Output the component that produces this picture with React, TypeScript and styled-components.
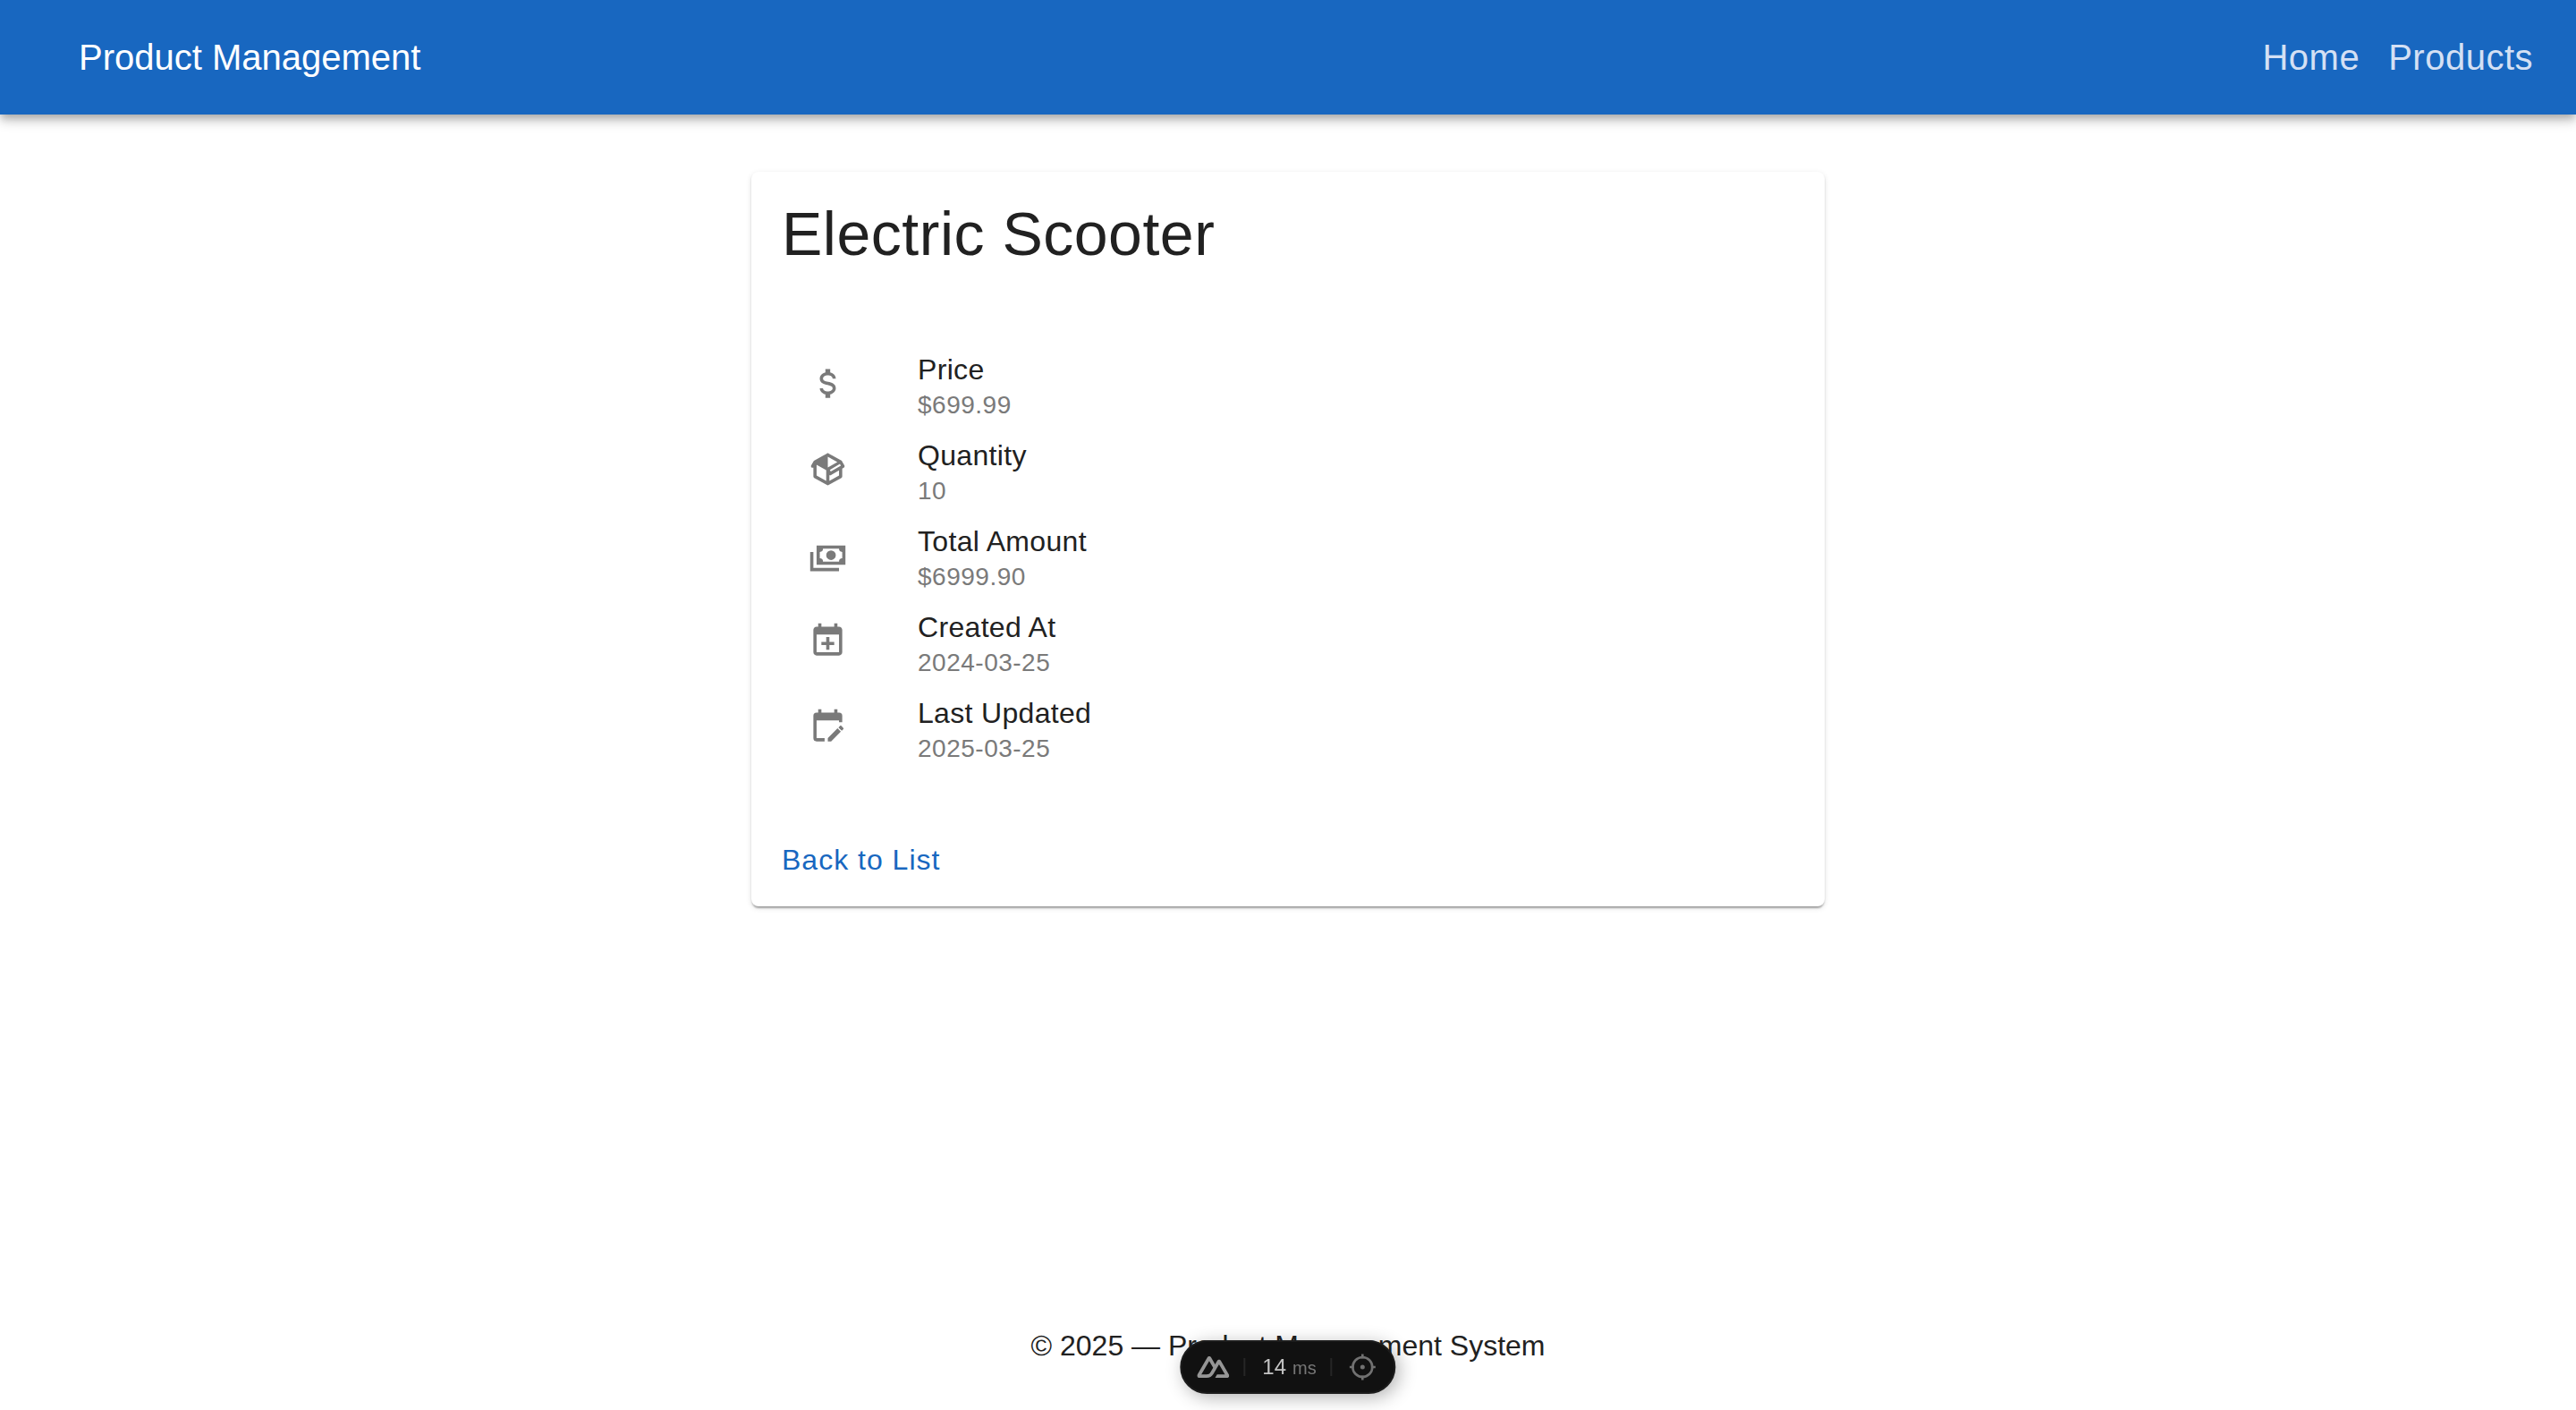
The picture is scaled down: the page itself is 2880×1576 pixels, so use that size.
import React from "react";
import styled, { createGlobalStyle } from "styled-components";

const GlobalStyle = createGlobalStyle`
  *, *::before, *::after { box-sizing: border-box; }
  body {
    margin: 0;
    background: #ffffff;
    color: #212121;
    font-family: "Liberation Sans", Helvetica, Arial, sans-serif;
    font-size: 32px;
    line-height: 48px;
  }
`;

const Page = styled.div`
  display: flex;
  flex-direction: column;
  min-height: 100vh;
`;

const AppBar = styled.header`
  display: flex;
  align-items: center;
  justify-content: space-between;
  height: 128px;
  padding: 0 48px 0 88px;
  background: #1867c0;
  color: #ffffff;
  font-size: 40px;
  box-shadow:
    0 4px 8px -2px rgba(0, 0, 0, 0.2),
    0 8px 10px 0 rgba(0, 0, 0, 0.14),
    0 2px 20px 0 rgba(0, 0, 0, 0.12);
`;

const Brand = styled.div`
  white-space: nowrap;
`;

const Nav = styled.nav`
  display: flex;
  gap: 32px;
`;

const NavLink = styled.a`
  color: #d4e0f4;
  text-decoration: none;
  letter-spacing: 0.0125em;
`;

const Main = styled.main`
  flex: 1;
  padding: 64px 32px;
`;

const Card = styled.article`
  max-width: 1200px;
  margin: 0 auto;
  padding: 30px 32px 28px 34px;
  border-radius: 8px;
  background: #ffffff;
  box-shadow:
    0 4px 2px -2px rgba(0, 0, 0, 0.2),
    0 2px 2px 0 rgba(0, 0, 0, 0.14),
    0 2px 6px 0 rgba(0, 0, 0, 0.12);
`;

const CardTitle = styled.h1`
  margin: 0;
  font-size: 68px;
  font-weight: 400;
  line-height: 78px;
  letter-spacing: 0.0075em;
`;

const DetailList = styled.ul`
  margin: 83px 0 74px;
  padding: 0;
  list-style: none;
`;

const DetailRow = styled.li`
  display: grid;
  grid-template-columns: 122px 1fr;
  padding: 8px 30px;
`;

const DetailIcon = styled.svg`
  width: 43px;
  height: 43px;
  margin-top: 16px;
  fill: #7a7a7a;
`;

const DetailLabel = styled.div`
  line-height: 44px;
  letter-spacing: 0.01em;
`;

const DetailValue = styled.div`
  color: #7a7a7a;
  font-size: 28px;
  line-height: 36px;
  letter-spacing: 0.018em;
`;

const BackLink = styled.a`
  display: inline-block;
  color: #1867c0;
  text-decoration: none;
  letter-spacing: 1px;
`;

const Footer = styled.footer`
  padding: 32px 32px 48px;
  text-align: center;
`;

const DevPill = styled.aside`
  position: fixed;
  bottom: 18px;
  left: 50%;
  transform: translateX(-50%);
  display: flex;
  align-items: center;
  height: 60px;
  padding: 0 20px 0 17px;
  border: 2px solid #1c1c1c;
  border-radius: 30px;
  background: #111111;
  color: #c4c4c4;
  font-size: 24px;
  line-height: 32px;
  box-shadow: 4px 4px 20px rgba(0, 0, 0, 0.3);
`;

const PillButton = styled.button`
  display: flex;
  padding: 0;
  border: 0;
  background: none;
  cursor: pointer;
`;

const PillDivider = styled.span`
  width: 2px;
  height: 20px;
  margin: 0 19px 0 16px;
  background: #262626;
`;

const Timing = styled.span`
  display: flex;
  align-items: baseline;
  gap: 7px;
`;

const Unit = styled.span`
  color: #777777;
  font-size: 20px;
`;

const icons = {
  price:
    "M7,15H9C9,16.08 10.37,17 12,17C13.63,17 15,16.08 15,15C15,13.9 13.96,13.5 11.76,12.97C9.64,12.44 7,11.78 7,9C7,7.21 8.47,5.69 10.5,5.18V3H13.5V5.18C15.53,5.69 17,7.21 17,9H15C15,7.92 13.63,7 12,7C10.37,7 9,7.92 9,9C9,10.1 10.04,10.5 12.24,11.03C14.36,11.56 17,12.22 17,15C17,16.79 15.53,18.31 13.5,18.82V21H10.5V18.82C8.47,18.31 7,16.79 7,15Z",
  box: "M2,10.96C1.5,10.68 1.35,10.07 1.63,9.59L3.13,7C3.24,6.8 3.41,6.66 3.6,6.58L11.43,2.18C11.59,2.06 11.79,2 12,2C12.21,2 12.41,2.06 12.57,2.18L20.47,6.62C20.66,6.72 20.82,6.88 20.91,7.08L22.36,9.6C22.64,10.08 22.47,10.69 22,10.96L21,11.54V16.5C21,16.88 20.79,17.21 20.47,17.38L12.57,21.82C12.41,21.94 12.21,22 12,22C11.79,22 11.59,21.94 11.43,21.82L3.53,17.38C3.21,17.21 3,16.88 3,16.5V10.96C2.7,11.13 2.32,11.14 2,10.96M12,4.15V4.15L12,10.85V10.85L17.96,7.5L12,4.15M5,15.91L11,19.29V12.58L5,9.21V15.91M19,15.91V12.69L14,15.59C13.67,15.77 13.3,15.76 13,15.6V19.29L19,15.91M13.85,13.36L20.13,9.73L19.55,8.72L13.27,12.35L13.85,13.36Z",
  cash: "M5,6H23V18H5V6M14,9A3,3 0 0,1 17,12A3,3 0 0,1 14,15A3,3 0 0,1 11,12A3,3 0 0,1 14,9M9,8A2,2 0 0,1 7,10V14A2,2 0 0,1 9,16H19A2,2 0 0,1 21,14V10A2,2 0 0,1 19,8H9M1,10H3V20H19V22H1V10Z",
  created:
    "M19 19V8H5V19H19M16 1H18V3H19C20.11 3 21 3.9 21 5V19C21 20.11 20.11 21 19 21H5C3.89 21 3 20.1 3 19V5C3 3.89 3.89 3 5 3H6V1H8V3H16V1M11 9.5H13V12.5H16V14.5H13V17.5H11V14.5H8V12.5H11V9.5Z",
  updated:
    "M19,3H18V1H16V3H8V1H6V3H5A2,2 0 0,0 3,5V19A2,2 0 0,0 5,21H10V19H5V8H19V9H21V5A2,2 0 0,0 19,3M21.7,13.35L20.7,14.35L18.65,12.35L19.65,11.35C19.85,11.14 20.19,11.13 20.42,11.35L21.7,12.63C21.89,12.83 21.89,13.15 21.7,13.35M12,18.94L18.07,12.88L20.12,14.88L14.06,21H12V18.94Z",
};

const details: { icon: keyof typeof icons; label: string; value: string }[] = [
  { icon: "price", label: "Price", value: "$699.99" },
  { icon: "box", label: "Quantity", value: "10" },
  { icon: "cash", label: "Total Amount", value: "$6999.90" },
  { icon: "created", label: "Created At", value: "2024-03-25" },
  { icon: "updated", label: "Last Updated", value: "2025-03-25" },
];

function NuxtMark() {
  return (
    <svg width="36" height="24" viewBox="0 54 324 216" fill="#969696" aria-hidden="true">
      <path d="M181.767 270H302.211C306.037 270 309.795 269.003 313.108 267.107C316.421 265.211 319.172 262.484 321.084 259.2C322.996 255.915 324.002 252.19 324 248.399C323.998 244.607 322.989 240.883 321.074 237.601L240.187 98.7439C238.275 95.4607 235.525 92.7342 232.213 90.8385C228.901 88.9429 225.143 87.9449 221.318 87.9449C217.494 87.9449 213.736 88.9429 210.424 90.8385C207.112 92.7342 204.361 95.4607 202.449 98.7439L181.767 134.272L141.329 64.7975C139.416 61.5145 136.664 58.7884 133.351 56.8931C130.038 54.9978 126.28 54 122.454 54C118.629 54 114.871 54.9978 111.558 56.8931C108.245 58.7884 105.493 61.5145 103.58 64.7975L2.92554 237.601C1.01067 240.883 0.00166657 244.607 0 248.399C-0.00166244 252.19 1.00407 255.915 2.91605 259.2C4.82803 262.484 7.57884 265.211 10.8918 267.107C14.2047 269.003 17.963 270 21.7886 270H97.3936C127.349 270 149.44 256.959 164.641 231.517L201.546 168.172L221.313 134.272L280.637 236.1H201.546L181.767 270ZM96.1611 236.065L43.3984 236.054L122.49 100.291L161.953 168.172L135.531 213.543C125.436 230.051 113.968 236.065 96.1611 236.065Z" />
    </svg>
  );
}

function InspectMark() {
  return (
    <svg width="30" height="30" viewBox="0 0 30 30" fill="none" stroke="#717171" strokeWidth="2.6" aria-hidden="true">
      <circle cx="15" cy="15" r="11" />
      <path d="M15 .5v5M15 24.5v5M.5 15h5M24.5 15h5" />
      <circle cx="15" cy="15" r="2.5" fill="#717171" stroke="none" />
    </svg>
  );
}

export default function App() {
  return (
    <Page>
      <GlobalStyle />
      <AppBar>
        <Brand>Product Management</Brand>
        <Nav>
          <NavLink href="#home">Home</NavLink>
          <NavLink href="#products">Products</NavLink>
        </Nav>
      </AppBar>
      <Main>
        <Card>
          <CardTitle>Electric Scooter</CardTitle>
          <DetailList>
            {details.map(({ icon, label, value }) => (
              <DetailRow key={label}>
                <DetailIcon viewBox="0 0 24 24" aria-hidden="true">
                  <path d={icons[icon]} />
                </DetailIcon>
                <div>
                  <DetailLabel>{label}</DetailLabel>
                  <DetailValue>{value}</DetailValue>
                </div>
              </DetailRow>
            ))}
          </DetailList>
          <BackLink href="#products">Back to List</BackLink>
        </Card>
      </Main>
      <Footer>© 2025 — Product Management System</Footer>
      <DevPill>
        <PillButton type="button" aria-label="Toggle devtools">
          <NuxtMark />
        </PillButton>
        <PillDivider />
        <Timing>
          14<Unit>ms</Unit>
        </Timing>
        <PillDivider />
        <PillButton type="button" aria-label="Inspect component">
          <InspectMark />
        </PillButton>
      </DevPill>
    </Page>
  );
}
